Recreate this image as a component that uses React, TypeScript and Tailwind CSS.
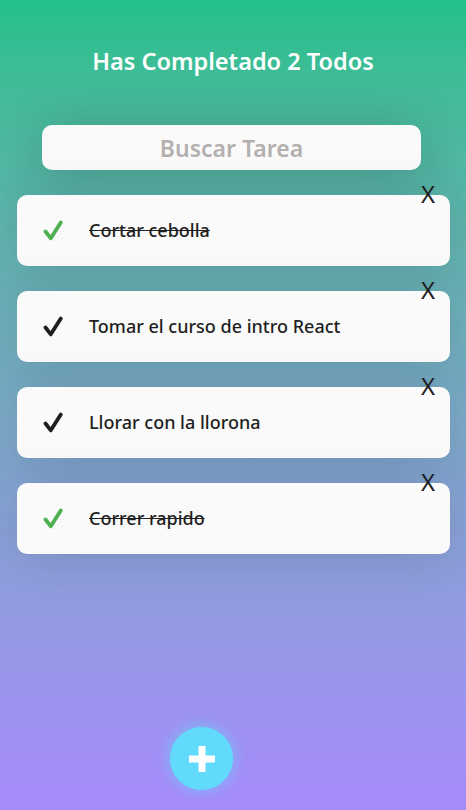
import React from "react";

interface Todo {
  text: string;
  completed: boolean;
}

const todos: Todo[] = [
  { text: "Cortar cebolla", completed: true },
  { text: "Tomar el curso de intro React", completed: false },
  { text: "Llorar con la llorona", completed: false },
  { text: "Correr rapido", completed: true },
];

const CheckIcon = ({ color }: { color: string }) => (
  <svg width="20" height="21" viewBox="0 0 20 21" fill="none">
    <path
      d="M2.5 11.5 L7.8 18.3 L17.8 2.5"
      stroke={color}
      strokeWidth="3.8"
      strokeLinecap="round"
      strokeLinejoin="round"
    />
  </svg>
);

const TodoItem: React.FC<Todo> = ({ text, completed }) => {
  return (
    <li className="relative flex items-center h-[71px] bg-[#fafafa] rounded-[10px] shadow-[0_5px_50px_rgba(32,35,41,0.15)]">
      <span className="w-[72px] flex justify-center">
        <CheckIcon color={completed ? "#4caf50" : "#1f1f1f"} />
      </span>
      <p
        className={`text-[18px] font-medium text-[#1f1f1f] ${
          completed ? "line-through" : ""
        }`}
      >
        {text}
      </p>
      <span className="absolute right-[15px] -top-[16px] text-[24px] leading-[30px] text-[#1f1f1f]">
        X
      </span>
    </li>
  );
};

export default function App() {
  return (
    <div
      className="relative min-h-screen h-[810px] bg-gradient-to-b from-[#22c08b] to-[#a78afc] overflow-hidden"
      style={{ fontFamily: "'Noto Sans', 'Open Sans', sans-serif" }}
    >
      <h1 className="pt-[43px] text-center text-white text-[23.5px] font-semibold leading-[36px]">
        Has Completado 2 Todos
      </h1>
      <div className="mt-[46px] px-[42px] pr-[45px]">
        <input
          className="w-full h-[45px] rounded-[10px] bg-[#fafafa] text-center text-[23px] font-semibold text-[#1f1f1f] placeholder:text-[#b5b0b0] outline-none shadow-[0_5px_50px_rgba(32,35,41,0.25)]"
          placeholder="Buscar Tarea"
        />
      </div>
      <ul className="mt-[25px] px-[17px] pr-[16px] flex flex-col gap-[25px]">
        {todos.map((t) => (
          <TodoItem key={t.text} text={t.text} completed={t.completed} />
        ))}
      </ul>
      <button className="absolute left-[170px] bottom-[20px] w-[63px] h-[63px] rounded-full bg-[#61dafb] text-white flex items-center justify-center shadow-[0_0_15px_rgba(97,218,250,0.7)]">
        <svg width="26" height="26" viewBox="0 0 26 26">
          <rect x="9.5" y="0" width="7" height="26" fill="white" />
          <rect x="0" y="9.5" width="26" height="7" fill="white" />
        </svg>
      </button>
    </div>
  );
}
